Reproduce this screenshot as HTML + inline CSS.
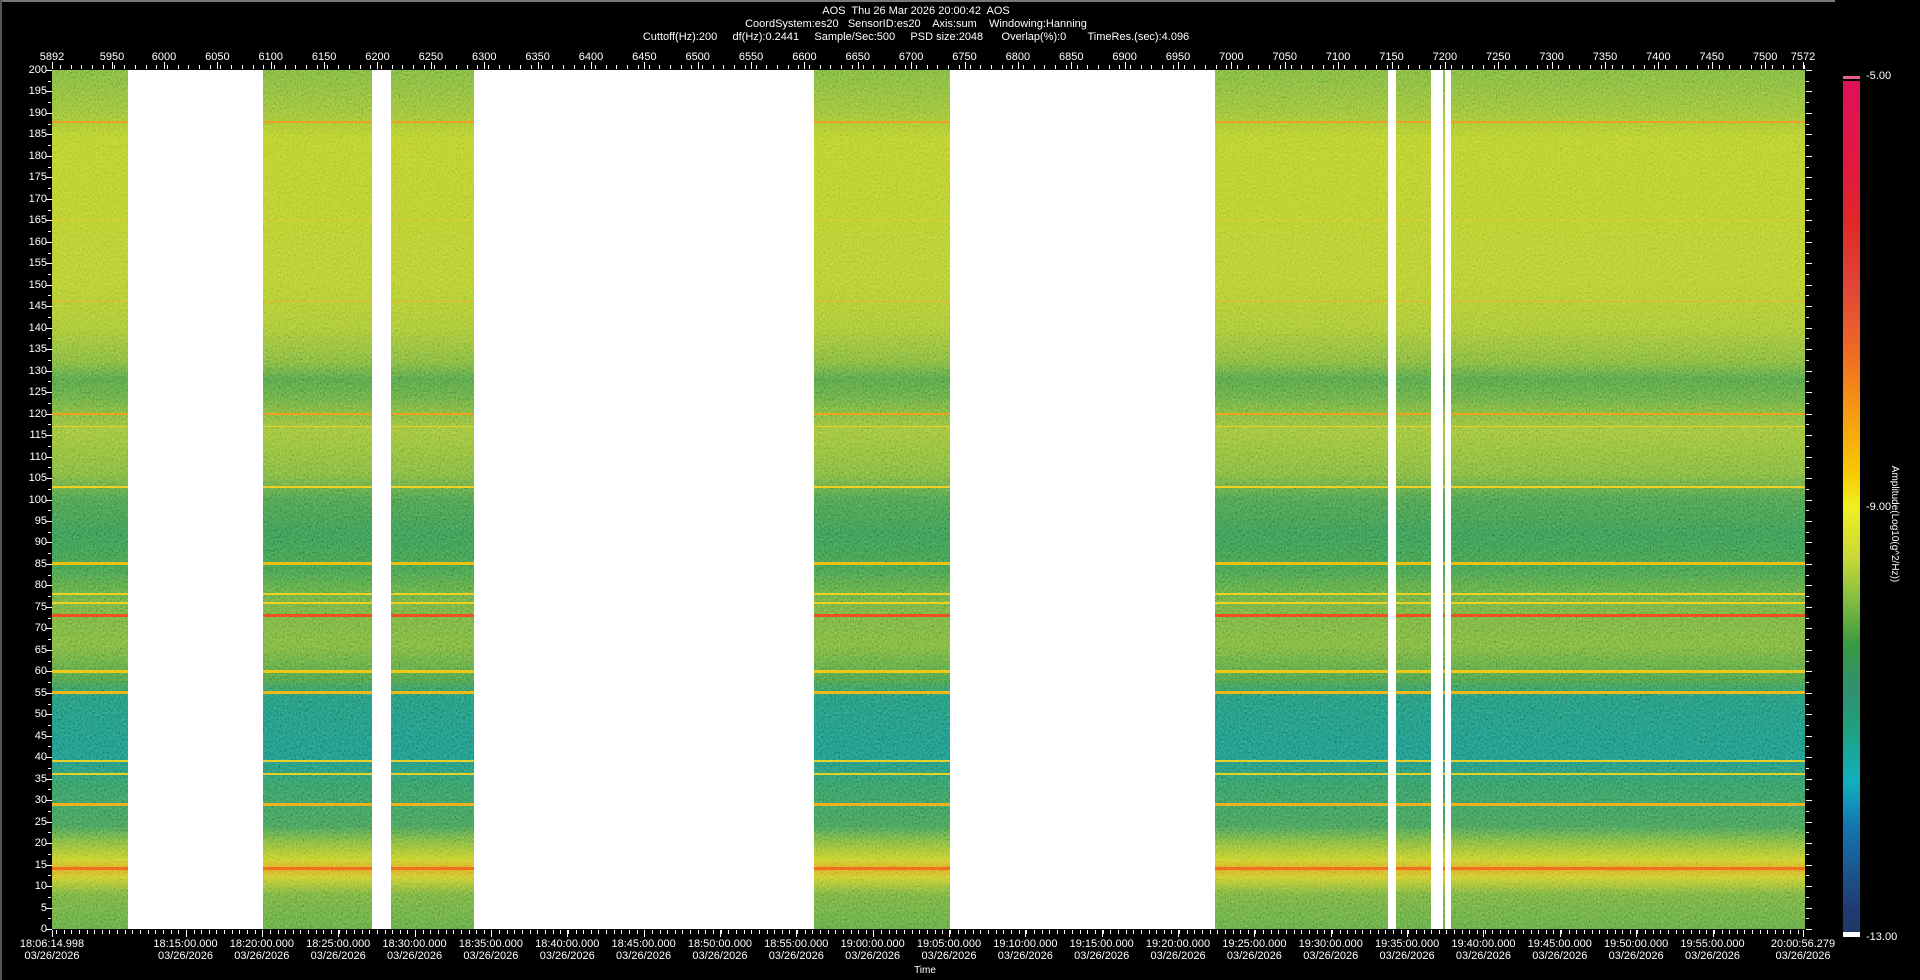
<!DOCTYPE html>
<html><head><meta charset="utf-8"><style>
*{margin:0;padding:0;box-sizing:border-box}
body{width:1920px;height:980px;background:#000;position:relative;overflow:hidden;font-family:"Liberation Sans Narrow","Liberation Sans",sans-serif;color:#fff}
.t{position:absolute;font-size:11px;white-space:nowrap;line-height:12px}
.c{transform:translateX(-50%);text-align:center}
#plot{position:absolute;left:52px;top:70px;width:1753px;height:859px;
background:linear-gradient(to bottom,#80b842 0%,#9cc23c 5%,#bcd030 8%,#b8ce33 25%,#aac838 30%,#84b842 34%,#58a44c 36%,#68ac47 38%,#a0c43c 42%,#84b842 47%,#50a050 50%,#3e9a56 54%,#46a050 58%,#74b244 62%,#80b642 67%,#52a24c 71%,#28987c 73%,#22988a 80%,#389c68 83%,#48a05a 88%,#8abb40 90%,#cad02e 92%,#dca828 93%,#cccc32 94%,#78b244 96%,#66aa48 100%)}
.hl{position:absolute;left:0;width:100%}
.gap{position:absolute;top:0;height:100%;background:#fff}
.yt{position:absolute;right:1873px;font-size:11px;line-height:11px}
.tk{position:absolute;background:#fff}
</style></head><body>
<div style="position:absolute;left:0;top:0;width:1835px;height:2px;background:#777"></div>
<div style="position:absolute;left:0;top:0;width:2px;height:980px;background:#555"></div>
<div class="t c" style="left:916px;top:5px">AOS&nbsp; Thu 26 Mar 2026 20:00:42&nbsp; AOS</div>
<div class="t c" style="left:916px;top:18px">CoordSystem:es20&nbsp;&nbsp; SensorID:es20&nbsp;&nbsp;&nbsp; Axis:sum&nbsp;&nbsp;&nbsp; Windowing:Hanning</div>
<div class="t c" style="left:916px;top:31px">Cuttoff(Hz):200&nbsp;&nbsp;&nbsp;&nbsp; df(Hz):0.2441&nbsp;&nbsp;&nbsp;&nbsp; Sample/Sec:500&nbsp;&nbsp;&nbsp;&nbsp; PSD size:2048&nbsp;&nbsp;&nbsp;&nbsp;&nbsp; Overlap(%):0&nbsp;&nbsp;&nbsp;&nbsp;&nbsp;&nbsp; TimeRes.(sec):4.096</div>
<div id="plot">
<svg width="1753" height="859" style="position:absolute;left:0;top:0;mix-blend-mode:overlay;opacity:.45"><filter id="n"><feTurbulence type="fractalNoise" baseFrequency="0.7 0.45" numOctaves="2"/><feColorMatrix type="saturate" values="0"/><feComponentTransfer><feFuncR type="linear" slope="3" intercept="-1"/><feFuncG type="linear" slope="3" intercept="-1"/><feFuncB type="linear" slope="3" intercept="-1"/></feComponentTransfer></filter><rect width="1753" height="859" filter="url(#n)"/></svg>
<div id="lines"></div>
<div class="gap" style="left:76px;width:135px"></div>
<div class="gap" style="left:320px;width:19px"></div>
<div class="gap" style="left:422px;width:340px"></div>
<div class="gap" style="left:898px;width:265px"></div>
<div class="gap" style="left:1336px;width:8px"></div>
<div class="gap" style="left:1379px;width:12px"></div>
<div class="gap" style="left:1393px;width:6px"></div>
</div>
<div id="ax"></div>
<div style="position:absolute;left:1843px;top:76px;width:17px;height:861px;background:linear-gradient(to bottom,#e8608a 0,#e8608a 3px,#000 3px,#000 5px,#e0105a 5px,#e21840 10%,#e02828 17%,#e04838 25%,#f07020 33%,#f5a010 40%,#f8c800 46%,#f0f020 50%,#c8d838 56%,#80bc40 61%,#3a9a40 66%,#309070 71%,#20a080 76%,#10b0c0 82%,#1478b0 87%,#1a5890 92%,#203a70 97%,#203868 99.4%,#fff 99.4%)"></div>
<div class="t" style="left:1866px;top:70px">-5.00</div>
<div class="t" style="left:1866px;top:501px">-9.00</div>
<div class="t" style="left:1866px;top:931px">-13.00</div>
<div class="t" style="left:1894px;top:524px;transform:translate(-50%,-50%) rotate(90deg);font-size:10px">Amplitude(Log10(g^2/Hz))</div>
<div class="t c" style="left:925px;top:965px;font-size:10px">Time</div>
<script>
var L=document.getElementById('lines'),h='';
function fy(f){return (200-f)*859/200}
[[188,'#f0a020',2],[165,'#e8c830',1],[146,'#f0b030',1],[120,'#f0a020',2],[117,'#e8d028',1],[103,'#f0d020',2],[85,'#f0c010',3],[78,'#f0d020',2],[76,'#f0d020',2],[73,'#f05020',3],[60,'#f0c818',3],[55,'#f0b818',3],[39,'#e8d028',2],[36,'#e8d028',2],[29,'#f0b020',3],[14,'#f07020',3]].forEach(function(a){h+='<div class="hl" style="top:'+(fy(a[0])-a[2]/2)+'px;height:'+a[2]+'px;background:'+a[1]+'"></div>'});
L.innerHTML=h;
var A='';
for(var f=200;f>=0;f-=2.5){var y=70+fy(f);var maj=(f%5==0);A+='<div class="tk" style="left:'+(maj?46:48)+'px;top:'+Math.round(y)+'px;width:'+(maj?6:3)+'px;height:1px"></div><div class="tk" style="left:1806px;top:'+Math.round(y)+'px;width:'+(maj?6:3)+'px;height:1px"></div>';if(maj)A+='<div class="yt" style="top:'+(Math.round(y)-5)+'px">'+f+'</div>';}
function lab(x,s){A+='<div class="t c" style="left:'+x+'px;top:51px">'+s+'</div><div class="tk" style="left:'+Math.round(x)+'px;top:62px;width:1px;height:7px"></div>';}
lab(52,'5892');lab(112,'5950');for(var k=0;k<=30;k++)lab(164+53.37*k,String(6000+50*k));lab(1803,'7572');
for(var x=60;x<1805;x+=10.7)A+='<div class="tk" style="left:'+Math.round(x)+'px;top:65px;width:1px;height:4px"></div>';
for(var x=56;x<1805;x+=7.64)A+='<div class="tk" style="left:'+Math.round(x)+'px;top:930px;width:1px;height:4px"></div>';
function tl(x,s){A+='<div class="t c" style="left:'+x+'px;top:938px">'+s+'<br>03/26/2026</div><div class="tk" style="left:'+Math.round(x)+'px;top:930px;width:1px;height:7px"></div>';}
tl(52,'18:06:14.998');
for(var k=0;k<=20;k++){var m=15+5*k,hh=18+Math.floor(m/60);m=m%60;tl(185.5+76.35*k,hh+':'+(m<10?'0':'')+m+':00.000');}
tl(1803,'20:00:56.279');
document.getElementById('ax').innerHTML=A;
</script>
</body></html>
